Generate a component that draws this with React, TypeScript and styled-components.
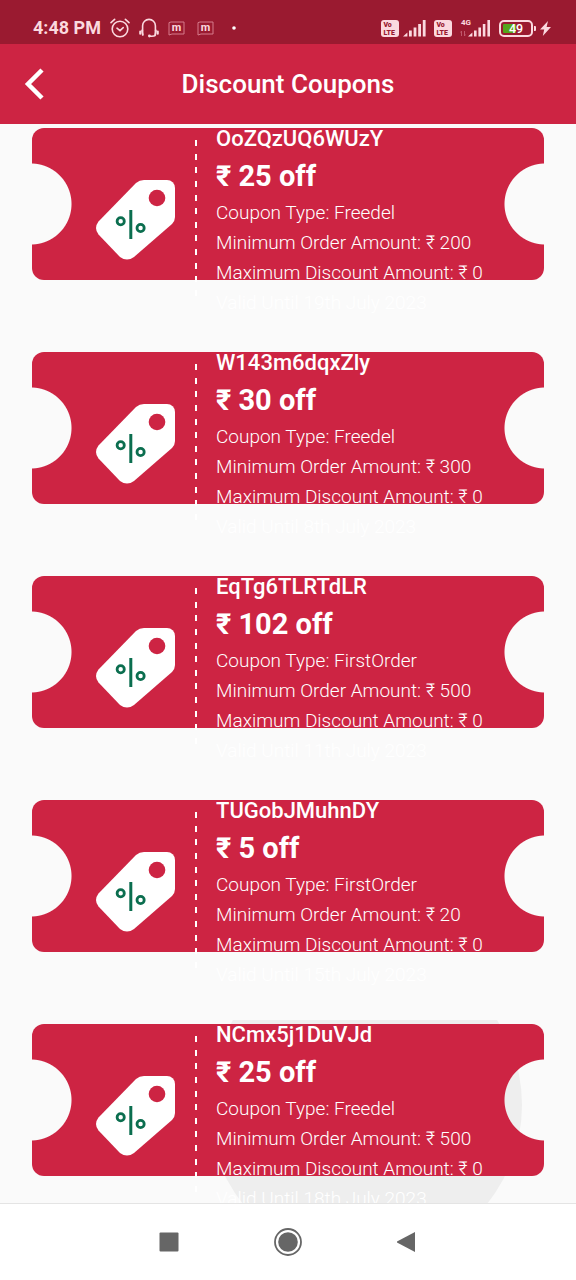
import React from "react";
import styled, { createGlobalStyle } from "styled-components";

const RED = "#cd2443";
const DARK_RED = "#9a1a30";
const PAPER = "#fafafa";
const STATUS_INK = "#fbd9df";

const GlobalStyle = createGlobalStyle`
  * { box-sizing: border-box; }
  body {
    margin: 0;
    background: ${PAPER};
    font-family: Roboto, "Liberation Sans", sans-serif;
  }
`;

const Screen = styled.div`
  display: flex;
  flex-direction: column;
  height: 100vh;
`;

const StatusBar = styled.div`
  flex: none;
  display: flex;
  justify-content: space-between;
  align-items: center;
  height: 44px;
  padding: 12px 25px 0 33px;
  background: ${DARK_RED};
  color: ${STATUS_INK};
`;

const StatusGroup = styled.div<{ $gap: number }>`
  display: flex;
  align-items: center;
  gap: ${(p) => p.$gap}px;

  svg { display: block; }
`;

const Clock = styled.span`
  font-size: 18px;
  line-height: 20px;
  font-weight: 700;
`;

const AppBar = styled.header`
  flex: none;
  display: grid;
  grid-template-columns: 1fr auto 1fr;
  align-items: center;
  height: 80px;
  padding: 0 14px;
  background: ${RED};
  color: #fff;
`;

const BackButton = styled.button`
  justify-self: start;
  display: flex;
  align-items: center;
  justify-content: center;
  width: 40px;
  height: 40px;
  padding: 0;
  border: 0;
  background: none;
  color: inherit;
`;

const Title = styled.h1`
  margin: 0;
  font-size: 26px;
  line-height: 32px;
  font-weight: 500;
`;

const CouponList = styled.ul`
  flex: 1;
  min-height: 0;
  margin: 0;
  padding: 0;
  list-style: none;
  overflow-y: auto;
  scrollbar-width: none;
`;

const Tile = styled.li`
  position: relative;
  height: 224px;
  padding: 4px 32px 0;
  overflow: hidden;
`;

const Ripple = styled.span`
  position: absolute;
  left: 208px;
  top: -72px;
  width: 314px;
  height: 314px;
  border-radius: 50%;
  background: #eeeeee;
`;

const Ticket = styled.article`
  position: relative;
  display: flex;
  height: 152px;
  border-radius: 12px;
  background:
    radial-gradient(circle at -1px 50%, transparent 40px, ${RED} 41px) left / 50% 100% no-repeat,
    radial-gradient(circle at calc(100% + 1px) 50%, transparent 40px, ${RED} 41px) right / 50% 100% no-repeat;
  color: #fff;
`;

const Stub = styled.div`
  flex: none;
  width: 163px;
  padding: 52px 0 0 64px;

  svg { display: block; }
`;

const Perforation = styled.div`
  flex: none;
  display: flex;
  flex-direction: column;
  justify-content: space-between;
  width: 2px;
  height: 156px;
  margin-top: 12px;
`;

const Dash = styled.span`
  height: 6px;
  background: #fff;
`;

const Details = styled.div`
  flex: 1;
  padding-left: 19px;
  white-space: nowrap;
`;

const Code = styled.h2`
  margin: 0;
  font-size: 22px;
  line-height: 22px;
  font-weight: 500;
`;

const Amount = styled.p`
  margin: 8px 0 4px;
  font-size: 29px;
  line-height: 36px;
  font-weight: 700;
`;

const Line = styled.p`
  margin: 0;
  font-size: 19px;
  line-height: 30px;
  font-weight: 300;
`;

const NavBar = styled.nav`
  flex: none;
  display: flex;
  justify-content: center;
  align-items: center;
  gap: 79px;
  height: 77px;
  border-top: 1px solid #e4e4e4;
  background: #fff;
`;

const NavButton = styled.button`
  display: flex;
  align-items: center;
  justify-content: center;
  width: 40px;
  height: 40px;
  padding: 0;
  border: 0;
  background: none;
  color: #666;
`;

const AlarmIcon = () => (
  <svg width="20" height="20" viewBox="0 0 20 20" fill="none" stroke="currentColor" strokeWidth="1.6" strokeLinecap="round">
    <circle cx="10" cy="11" r="7.8" />
    <path d="M1 4.6 4.6 1.4M19 4.6 15.4 1.4M7 10.2 10 12.6 13.2 9.6" />
  </svg>
);

const HeadsetIcon = () => (
  <svg width="20" height="20" viewBox="0 0 20 20" fill="none" stroke="currentColor" strokeWidth="1.6" strokeLinecap="round">
    <path d="M3.6 13V7.8a6.4 6.4 0 0 1 12.8 0V13" />
    <path d="M1.2 13.4v2.4M3.2 12.6l.6 4.2M18.8 13.4v2.4M16.8 12.6l-.6 4.2" strokeWidth="2" />
    <path d="M16 17.6c-1 .8-2 .6-5 .6" />
    <circle cx="10.4" cy="18" r="1.4" fill="currentColor" stroke="none" />
  </svg>
);

const MIcon = () => (
  <svg width="17" height="15" viewBox="0 0 17 15">
    <path d="M1 1.6 3 1h13v12H4l-3 1z" fill="none" stroke="#d67a8b" strokeWidth="1" />
    <text x="8.5" y="10.4" textAnchor="middle" fontSize="11" fontWeight="700" fill="currentColor">m</text>
  </svg>
);

const VolteIcon = () => (
  <svg width="18" height="17" viewBox="0 0 18 17">
    <rect width="18" height="17" rx="3" fill="currentColor" />
    <text x="2.4" y="7.4" fontSize="7" fontWeight="900" fill={DARK_RED}>Vo</text>
    <text x="2.4" y="15.4" fontSize="7" fontWeight="900" fill={DARK_RED}>LTE</text>
  </svg>
);

const SignalIcon = () => (
  <svg width="23" height="17" viewBox="0 0 23 17" fill="currentColor">
    <path d="M0 16.5 4.4 12.5v4zM6 10.500h2.800v6H6zM10.600 7.500h2.800v9h-2.800zM15.200 4H18v12.500h-2.800zM19.800 0h2.800v16.500h-2.800z" />
  </svg>
);

const DataSignalIcon = () => (
  <svg width="31" height="20" viewBox="0 0 31 20" fill="currentColor">
    <text x="1" y="7" fontSize="8" fontWeight="700">4G</text>
    <path d="M1.5 13v5M0.6 14.5 1.5 13M4.5 13v5l.9-1.5" fill="none" stroke="#c0596c" strokeWidth="1" />
    <path d="M8 18.500l4.400-4v4zM14 12.500h2.600v6H14zM18.400 9.500H21v9h-2.600zM22.800 6h2.600v12.500h-2.600zM27.400 2H30v16.500h-2.600z" />
  </svg>
);

const BatteryIcon = () => (
  <svg width="37" height="17" viewBox="0 0 37 17">
    <rect x="1" y="1" width="32" height="15" rx="4" fill="none" stroke="currentColor" strokeWidth="2" />
    <rect x="4" y="4" width="13" height="9" rx="1" fill="#55a51c" />
    <path d="M35 6h1a1 1 0 0 1 1 1v3a1 1 0 0 1-1 1h-1z" fill="currentColor" />
    <text x="17" y="13" textAnchor="middle" fontSize="12.5" fontWeight="500" fill="#fff">49</text>
  </svg>
);

const BoltIcon = () => (
  <svg width="11" height="15" viewBox="0 0 11 15" fill="currentColor">
    <path d="M8 0 0 8.6h4.2L2.8 15 11 6H6.6z" />
  </svg>
);

const TagIcon = () => (
  <svg width="80" height="80" viewBox="0 0 80 80" aria-hidden="true">
    <path
      d="M48 0h23a8 8 0 0 1 8 8v29q0 4-3 7L38 77q-7 5-14 0L2.5 54.5q-5-6.500 0-13L40 3q3.500-3 8-3z"
      fill="#fff"
    />
    <circle cx="61" cy="18" r="8.3" fill={RED} />
    <g fill="none" stroke="#0b6e4f">
      <path d="M34.8 30v29" strokeWidth="3" />
      <circle cx="24.7" cy="41.2" r="3.6" strokeWidth="2.8" />
      <circle cx="44.6" cy="48" r="3.6" strokeWidth="2.8" />
    </g>
  </svg>
);

interface Coupon {
  code: string;
  off: number;
  type: string;
  minimum: number;
  until: string;
  pressed?: boolean;
}

const coupons: Coupon[] = [
  { code: "OoZQzUQ6WUzY", off: 25, type: "Freedel", minimum: 200, until: "19th July 2023" },
  { code: "W143m6dqxZly", off: 30, type: "Freedel", minimum: 300, until: "8th July 2023" },
  { code: "EqTg6TLRTdLR", off: 102, type: "FirstOrder", minimum: 500, until: "11th July 2023" },
  { code: "TUGobJMuhnDY", off: 5, type: "FirstOrder", minimum: 20, until: "15th July 2023" },
  { code: "NCmx5j1DuVJd", off: 25, type: "Freedel", minimum: 500, until: "18th July 2023", pressed: true },
];

const CouponTile = ({ coupon }: { coupon: Coupon }) => (
  <Tile>
    {coupon.pressed && <Ripple />}
    <Ticket>
      <Stub>
        <TagIcon />
      </Stub>
      <Perforation>
        {Array.from({ length: 12 }, (_, i) => (
          <Dash key={i} />
        ))}
      </Perforation>
      <Details>
        <Code>{coupon.code}</Code>
        <Amount>₹ {coupon.off} off</Amount>
        <Line>Coupon Type: {coupon.type}</Line>
        <Line>Minimum Order Amount: ₹ {coupon.minimum}</Line>
        <Line>Maximum Discount Amount: ₹ 0</Line>
        <Line>Valid Until {coupon.until}</Line>
      </Details>
    </Ticket>
  </Tile>
);

export default function App() {
  return (
    <Screen>
      <GlobalStyle />
      <StatusBar>
        <StatusGroup $gap={9}>
          <Clock>4:48 PM</Clock>
          <AlarmIcon />
          <HeadsetIcon />
          <StatusGroup $gap={12}>
            <MIcon />
            <MIcon />
            <svg width="14" height="4" viewBox="0 0 14 4">
              <circle cx="8" cy="2" r="1.8" fill="#fff" />
            </svg>
          </StatusGroup>
        </StatusGroup>
        <StatusGroup $gap={8}>
          <StatusGroup $gap={4}>
            <VolteIcon />
            <SignalIcon />
          </StatusGroup>
          <VolteIcon />
          <DataSignalIcon />
          <StatusGroup $gap={4}>
            <BatteryIcon />
            <BoltIcon />
          </StatusGroup>
        </StatusGroup>
      </StatusBar>
      <AppBar>
        <BackButton aria-label="Back">
          <svg width="22" height="34" viewBox="0 0 22 34" fill="none" stroke="currentColor" strokeWidth="4.5">
            <path d="M19 3 5 17l14 14" />
          </svg>
        </BackButton>
        <Title>Discount Coupons</Title>
      </AppBar>
      <CouponList>
        {coupons.map((coupon) => (
          <CouponTile key={coupon.code} coupon={coupon} />
        ))}
      </CouponList>
      <NavBar>
        <NavButton aria-label="Recent apps">
          <svg width="20" height="20" viewBox="0 0 20 20" fill="currentColor">
            <rect x="0.5" y="0.5" width="19" height="19" rx="1" />
          </svg>
        </NavButton>
        <NavButton aria-label="Home">
          <svg width="28" height="28" viewBox="0 0 28 28">
            <circle cx="14" cy="14" r="13" fill="none" stroke="currentColor" strokeWidth="1.8" />
            <circle cx="14" cy="14" r="9.8" fill="currentColor" />
          </svg>
        </NavButton>
        <NavButton aria-label="Back to previous app">
          <svg width="20" height="22" viewBox="0 0 20 22" fill="currentColor">
            <path d="M18 1v20L0 11.6q-1-.6 0-1.2z" />
          </svg>
        </NavButton>
      </NavBar>
    </Screen>
  );
}
